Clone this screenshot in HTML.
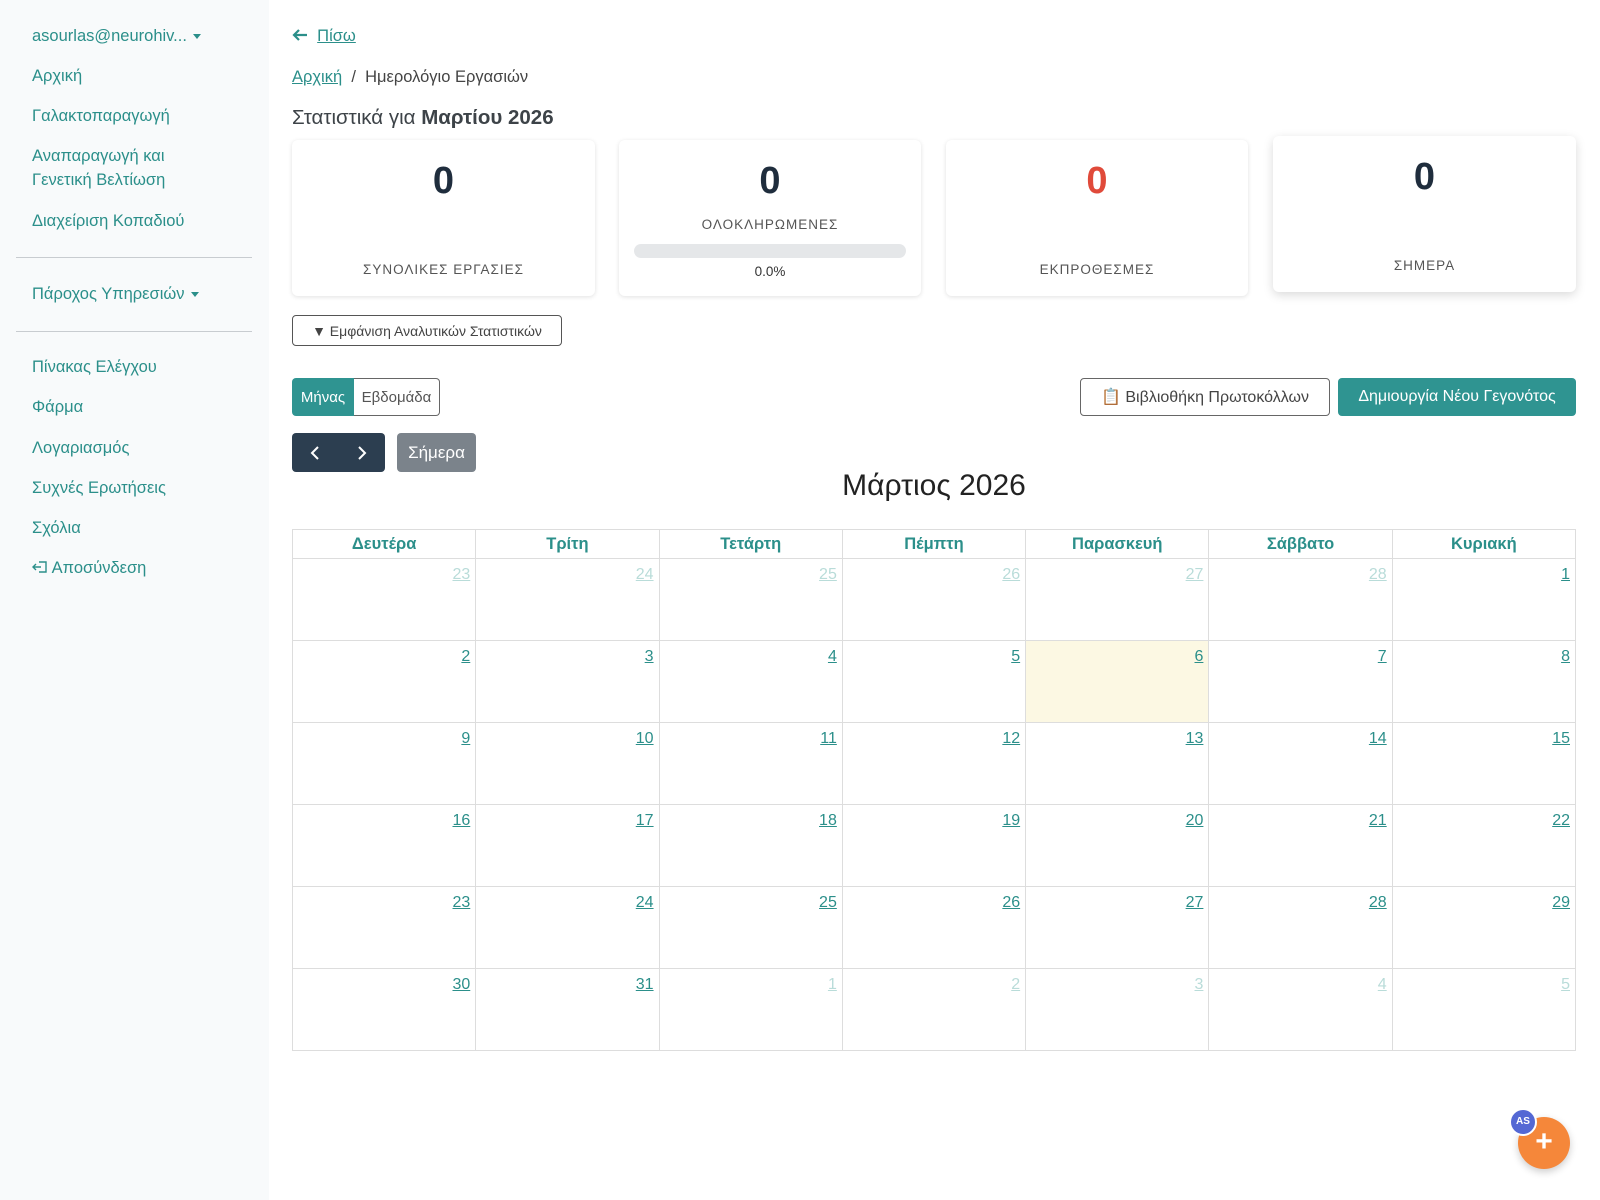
<!DOCTYPE html>
<html><head><meta charset="utf-8"><style>
*{box-sizing:border-box;margin:0;padding:0}
body{width:1600px;height:1200px;background:#fff;font-family:"Liberation Sans","DejaVu Sans",sans-serif;color:#3d4852;position:relative;overflow:hidden}
.sb{position:absolute;left:0;top:0;width:269px;height:1200px;background:#f8fafb}
.sb a{position:absolute;left:32px;color:#2b8f8a;font-size:16.5px;text-decoration:none;line-height:24px}
.sb hr{position:absolute;left:16px;width:236px;border:0;border-top:1px solid #c8ccd0}
.car{display:inline-block;width:0;height:0;border-left:4px solid transparent;border-right:4px solid transparent;border-top:5px solid #2b8f8a;vertical-align:middle;margin-left:6px}
.abs{position:absolute}
a.l{color:#2b8f8a;text-decoration:underline}
.card{position:absolute;top:140px;height:156px;background:#fff;border-radius:6px;box-shadow:0 1px 5px rgba(0,0,0,.12);text-align:center}
.card .n{position:absolute;left:0;right:0;top:20px;font-size:38px;font-weight:bold;color:#1f2d3d}
.card .t{position:absolute;left:0;right:0;font-size:13.5px;letter-spacing:1px;color:#555}
.btn{position:absolute;display:flex;align-items:center;justify-content:center;font-size:16.5px;border-radius:4px}
table{position:absolute;left:292px;top:529px;width:1284px;border-collapse:collapse;table-layout:fixed}
th{height:29px;border:1px solid #ddd;color:#2b8f8a;font-size:16.5px;font-weight:bold}
td{height:82px;border:1px solid #ddd;vertical-align:top;text-align:right;padding:7px 5px 4px;font-size:16px}
td a{color:#2b8f8a;text-decoration:underline}
td.o a{color:#b9dcd9}
td.today{background:#fcf8e3}
</style></head><body>
<div class="sb">
<a style="top:24px">asourlas@neurohiv...<span class="car"></span></a>
<a style="top:64px">Αρχική</a>
<a style="top:104px">Γαλακτοπαραγωγή</a>
<a style="top:144px">Αναπαραγωγή και<br>Γενετική Βελτίωση</a>
<a style="top:209px">Διαχείριση Κοπαδιού</a>
<hr style="top:257px">
<a style="top:282px">Πάροχος Υπηρεσιών<span class="car"></span></a>
<hr style="top:331px">
<a style="top:355px">Πίνακας Ελέγχου</a>
<a style="top:395px">Φάρμα</a>
<a style="top:436px">Λογαριασμός</a>
<a style="top:476px">Συχνές Ερωτήσεις</a>
<a style="top:516px">Σχόλια</a>
<a style="top:556px"><svg width="16" height="14" viewBox="0 0 16 14" style="vertical-align:-1px"><path d="M7 2h7v10H7M1 7h8M4 4L1 7l3 3" stroke="#2b8f8a" stroke-width="1.4" fill="none"/></svg> Αποσύνδεση</a>
</div>
<div class="abs" style="left:292px;top:27px;font-size:16.5px;color:#2b8f8a"><svg width="16" height="14" viewBox="0 0 16 14" style="vertical-align:-1px"><path d="M15 7H2M7 2L2 7l5 5" stroke="#2b8f8a" stroke-width="2.2" fill="none"/></svg>&nbsp; <a class="l">Πίσω</a></div>
<div class="abs" style="left:292px;top:68px;font-size:16.5px;color:#444"><a class="l">Αρχική</a> &nbsp;/&nbsp; Ημερολόγιο Εργασιών</div>
<div class="abs" style="left:292px;top:106px;font-size:20.5px;color:#3d4348">Στατιστικά για <b>Μαρτίου 2026</b></div>
<div class="card" style="left:292px;width:303px"><div class="n">0</div><div class="t" style="top:122px">ΣΥΝΟΛΙΚΕΣ ΕΡΓΑΣΙΕΣ</div></div>
<div class="card" style="left:619px;width:302px"><div class="n">0</div><div class="t" style="top:77px">ΟΛΟΚΛΗΡΩΜΕΝΕΣ</div>
<div style="position:absolute;left:15px;right:15px;top:104px;height:14px;background:#e5e7e9;border-radius:7px"></div><div class="t" style="top:124px;letter-spacing:0;color:#333">0.0%</div></div>
<div class="card" style="left:946px;width:302px"><div class="n" style="color:#e04a3a">0</div><div class="t" style="top:122px">ΕΚΠΡΟΘΕΣΜΕΣ</div></div>
<div class="card" style="left:1273px;width:303px;top:136px;box-shadow:0 3px 10px rgba(0,0,0,.15)"><div class="n">0</div><div class="t" style="top:122px">ΣΗΜΕΡΑ</div></div>
<div class="btn" style="left:292px;top:315px;width:270px;height:31px;border:1px solid #555;font-size:14px;color:#444">▼ Εμφάνιση Αναλυτικών Στατιστικών</div>
<div class="btn" style="left:292px;top:378px;width:62px;height:38px;background:#2f9491;color:#fff;border-radius:4px 0 0 4px;font-size:15px">Μήνας</div>
<div class="btn" style="left:354px;top:378px;width:86px;height:38px;border:1px solid #666;border-left:0;border-radius:0 4px 4px 0;color:#555;font-size:15px">Εβδομάδα</div>
<div class="btn" style="left:292px;top:433px;width:93px;height:39px;background:#2c3e50;color:#fff;font-size:20px;justify-content:space-around">
<svg width="12" height="16" viewBox="0 0 12 16"><path d="M9 2L3 8l6 6" stroke="#fff" stroke-width="2" fill="none"/></svg>
<svg width="12" height="16" viewBox="0 0 12 16"><path d="M3 2l6 6-6 6" stroke="#fff" stroke-width="2" fill="none"/></svg></div>
<div class="btn" style="left:397px;top:433px;width:79px;height:39px;background:#7b838b;color:#fff;font-size:17px">Σήμερα</div>
<div class="btn" style="left:1080px;top:378px;width:250px;height:38px;border:1px solid #666;color:#444;font-size:16px">📋 Βιβλιοθήκη Πρωτοκόλλων</div>
<div class="btn" style="left:1338px;top:378px;width:238px;height:38px;background:#2f9491;color:#fff;font-size:16px">Δημιουργία Νέου Γεγονότος</div>
<div class="abs" style="left:292px;width:1284px;top:469px;text-align:center;font-size:30px;color:#222">Μάρτιος 2026</div>
<table>
<tr><th>Δευτέρα</th><th>Τρίτη</th><th>Τετάρτη</th><th>Πέμπτη</th><th>Παρασκευή</th><th>Σάββατο</th><th>Κυριακή</th></tr>
<tr><td class="o"><a>23</a></td><td class="o"><a>24</a></td><td class="o"><a>25</a></td><td class="o"><a>26</a></td><td class="o"><a>27</a></td><td class="o"><a>28</a></td><td><a>1</a></td></tr>
<tr><td><a>2</a></td><td><a>3</a></td><td><a>4</a></td><td><a>5</a></td><td class="today"><a>6</a></td><td><a>7</a></td><td><a>8</a></td></tr>
<tr><td><a>9</a></td><td><a>10</a></td><td><a>11</a></td><td><a>12</a></td><td><a>13</a></td><td><a>14</a></td><td><a>15</a></td></tr>
<tr><td><a>16</a></td><td><a>17</a></td><td><a>18</a></td><td><a>19</a></td><td><a>20</a></td><td><a>21</a></td><td><a>22</a></td></tr>
<tr><td><a>23</a></td><td><a>24</a></td><td><a>25</a></td><td><a>26</a></td><td><a>27</a></td><td><a>28</a></td><td><a>29</a></td></tr>
<tr><td><a>30</a></td><td><a>31</a></td><td class="o"><a>1</a></td><td class="o"><a>2</a></td><td class="o"><a>3</a></td><td class="o"><a>4</a></td><td class="o"><a>5</a></td></tr>
</table>
<div class="abs" style="left:1518px;top:1117px;width:52px;height:52px;border-radius:50%;background:#f5873a;box-shadow:0 3px 8px rgba(0,0,0,.2);color:#fff;font-size:30px;font-weight:bold;text-align:center;line-height:50px">+</div>
<div class="abs" style="left:1509px;top:1108px;width:28px;height:28px;border-radius:50%;background:#5468d4;border:2px solid #fff;color:#fff;font-size:10px;font-weight:bold;text-align:center;line-height:24px">AS</div>
</body></html>
